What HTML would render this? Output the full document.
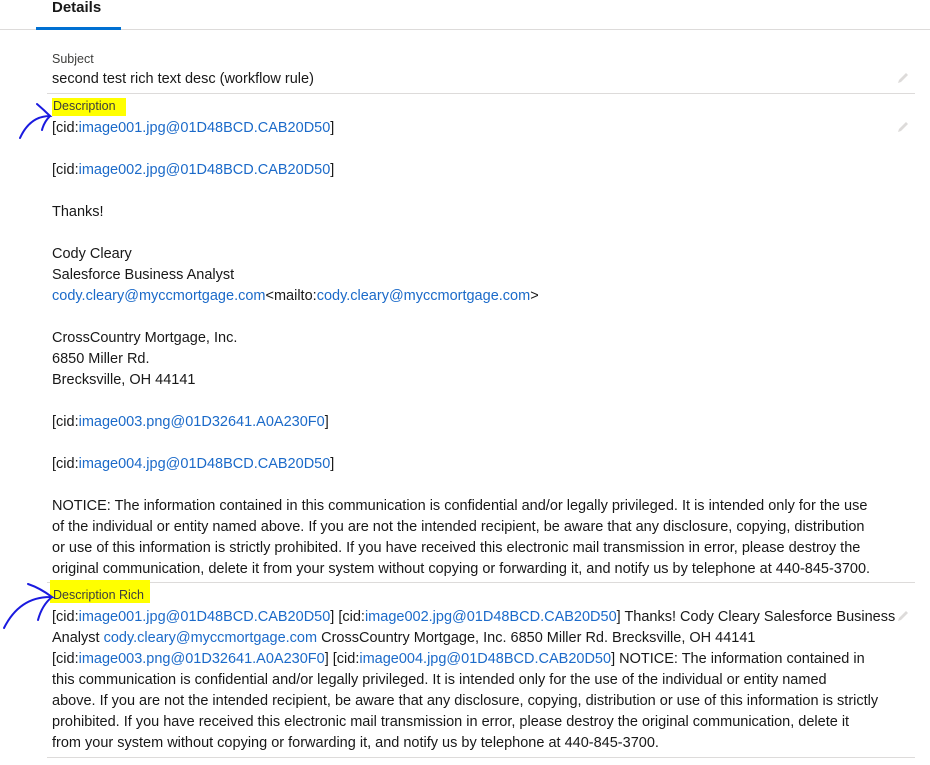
<!DOCTYPE html>
<html><head><meta charset="utf-8"><style>
body{margin:0;width:930px;height:765px;background:#fff;position:relative;overflow:hidden;font-family:"Liberation Sans",sans-serif;color:#181818}
.a{position:absolute;white-space:nowrap;font-size:14.5px;line-height:21px}
.l{color:#3e3e3c;font-size:12.5px}
.b{color:#1b6ac9}
.hr{position:absolute;left:47px;width:868px;height:1px;background:#dddbda}
.hl{position:absolute;background:#ffff00}
.p{position:absolute;left:896px}
</style></head><body>
<div class="a" style="left:52px;top:-3px;font-size:15px;font-weight:bold;color:#181818">Details</div>
<div style="position:absolute;left:0;top:29px;width:930px;height:1px;background:#dddbda"></div>
<div style="position:absolute;left:36px;top:27px;width:85px;height:3px;background:#0070d2"></div>

<div class="a l" style="left:52px;top:49px">Subject</div>
<div class="a" style="left:52px;top:69px">second test rich text desc (workflow rule)</div>
<div class="hr" style="top:93px"></div>

<div class="hl" style="left:52px;top:98px;width:74px;height:18px"></div>
<div class="a l" style="left:53px;top:96px">Description</div>
<div class="a" style="left:52px;top:118px;line-height:21px">
[cid:<span class="b">image001.jpg@01D48BCD.CAB20D50</span>]<br><br>
[cid:<span class="b">image002.jpg@01D48BCD.CAB20D50</span>]<br><br>
Thanks!<br><br>
Cody Cleary<br>
Salesforce Business Analyst<br>
<span class="b">cody.cleary@myccmortgage.com</span>&lt;mailto:<span class="b">cody.cleary@myccmortgage.com</span>&gt;<br><br>
CrossCountry Mortgage, Inc.<br>
6850 Miller Rd.<br>
Brecksville, OH 44141<br><br>
[cid:<span class="b">image003.png@01D32641.A0A230F0</span>]<br><br>
[cid:<span class="b">image004.jpg@01D48BCD.CAB20D50</span>]<br><br>
NOTICE: The information contained in this communication is confidential and/or legally privileged. It is intended only for the use<br>
of the individual or entity named above. If you are not the intended recipient, be aware that any disclosure, copying, distribution<br>
or use of this information is strictly prohibited. If you have received this electronic mail transmission in error, please destroy the<br>
original communication, delete it from your system without copying or forwarding it, and notify us by telephone at 440-845-3700.
</div>
<div class="hr" style="top:582px"></div>

<div class="hl" style="left:50px;top:580px;width:100px;height:23px"></div>
<div class="a l" style="left:53px;top:585px">Description Rich</div>
<div class="a" style="left:52px;top:607px">
[cid:<span class="b">image001.jpg@01D48BCD.CAB20D50</span>] [cid:<span class="b">image002.jpg@01D48BCD.CAB20D50</span>] Thanks! Cody Cleary Salesforce Business<br>
Analyst <span class="b">cody.cleary@myccmortgage.com</span> CrossCountry Mortgage, Inc. 6850 Miller Rd. Brecksville, OH 44141<br>
[cid:<span class="b">image003.png@01D32641.A0A230F0</span>] [cid:<span class="b">image004.jpg@01D48BCD.CAB20D50</span>] NOTICE: The information contained in<br>
this communication is confidential and/or legally privileged. It is intended only for the use of the individual or entity named<br>
above. If you are not the intended recipient, be aware that any disclosure, copying, distribution or use of this information is strictly<br>
prohibited. If you have received this electronic mail transmission in error, please destroy the original communication, delete it<br>
from your system without copying or forwarding it, and notify us by telephone at 440-845-3700.
</div>
<div class="hr" style="top:757px"></div>

<svg class="p" style="top:71px" width="14" height="14" viewBox="0 0 14 14"><path d="M2 12l1-3 7-7 2 2-7 7z" fill="#dddbda"/></svg>
<svg class="p" style="top:120px" width="14" height="14" viewBox="0 0 14 14"><path d="M2 12l1-3 7-7 2 2-7 7z" fill="#dddbda"/></svg>
<svg class="p" style="top:609px" width="14" height="14" viewBox="0 0 14 14"><path d="M2 12l1-3 7-7 2 2-7 7z" fill="#dddbda"/></svg>

<svg style="position:absolute;left:0;top:0" width="60" height="660" fill="none" stroke="#1a1adf" stroke-width="2" stroke-linecap="round">
<path d="M37 104 Q44 110 50 116 Q30 116 20 138"/>
<path d="M50 116 Q44 122 42 130"/>
<path d="M28 584 Q40 588 52 597 Q20 596 4 628"/>
<path d="M52 597 Q42 605 38 620"/>
</svg>
</body></html>
